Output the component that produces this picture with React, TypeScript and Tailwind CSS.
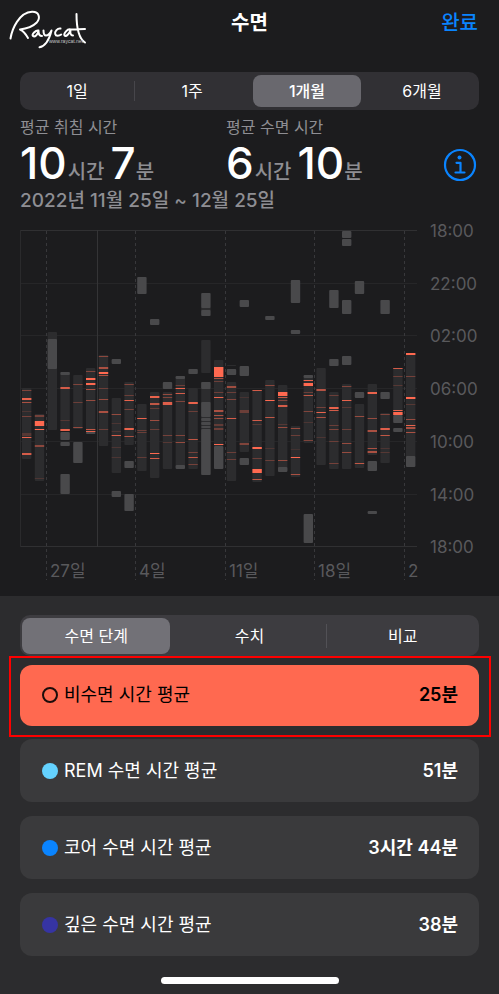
import React, { useState } from 'react';
import clsx from 'clsx';

type Range = [number, number];
// top, height, opacity
type Stripe = [number, number, number];

interface Night {
  asleep?: Range[];
  inBed?: Range[];
  awake?: Stripe[];
}

const nights: Night[] = [
  { asleep: [[388, 459]], awake: [[390, 1, 0.4], [398, 2, 0.9], [402, 1, 0.6], [411, 1, 0.15], [416, 1, 0.35], [433, 3, 0.2], [437, 1, 0.9], [453, 2, 0.8]] },
  { asleep: [[414, 481]], awake: [[415, 2, 0.35], [421, 5, 1], [429, 1, 1], [445, 2, 0.45], [478, 1, 0.15]] },
  { asleep: [[332, 430]], inBed: [[339, 369]] },
  { asleep: [[372, 431]], inBed: [[372, 375], [432, 440], [442, 446], [474, 494]], awake: [[387, 2, 0.8], [420, 1, 0.2], [429, 2, 0.9]] },
  { asleep: [[375, 429]], inBed: [[442, 463]], awake: [[384, 1, 0.4], [402, 1, 0.3], [427, 1, 0.5]] },
  { asleep: [[368, 433]], inBed: [[432, 434]], awake: [[371, 1, 0.4], [378, 2, 1], [383, 2, 1], [389, 1, 0.6], [400, 1, 0.5], [429, 1, 0.7], [431, 1, 0.9]] },
  { asleep: [[355, 446]], awake: [[356, 1, 0.45], [367, 2, 0.6], [372, 2, 1], [375, 1, 0.6], [388, 1, 0.3], [399, 1, 0.5], [411, 2, 0.6], [429, 1, 0.3]] },
  { asleep: [[398, 473]], inBed: [[359, 364], [491, 497]], awake: [[414, 1, 0.5], [423, 1, 0.15], [431, 1, 0.15], [435, 1, 0.8], [447, 1, 0.15], [457, 1, 0.15]] },
  { asleep: [[382, 445]], inBed: [[461, 468], [494, 511]], awake: [[384, 1, 0.4], [395, 1, 0.3], [400, 1, 0.9], [409, 1, 0.35], [428, 2, 0.9], [436, 1, 0.6]] },
  { asleep: [[404, 471]], inBed: [[277, 294]], awake: [[418, 1, 0.9], [430, 1, 0.3], [432, 1, 0.3], [457, 1, 0.25]] },
  { asleep: [[392, 478]], inBed: [[319, 325]], awake: [[396, 2, 0.9], [403, 2, 0.7], [408, 1, 0.25], [420, 1, 0.55], [429, 1, 0.3], [453, 1, 1], [458, 1, 0.8]] },
  { asleep: [[392, 469]], inBed: [[382, 389]], awake: [[394, 1, 0.5], [397, 1, 0.4], [402, 3, 0.85], [435, 1, 0.35], [442, 1, 0.2]] },
  { asleep: [[376, 468]], inBed: [[376, 379], [465, 469]], awake: [[385, 1, 0.3], [388, 1, 0.9], [393, 1, 0.8], [401, 1, 0.4], [435, 1, 0.4], [442, 1, 0.5]] },
  { asleep: [[388, 469]], inBed: [[369, 374]], awake: [[402, 2, 0.9], [411, 1, 0.3], [439, 1, 0.7], [452, 1, 0.35], [457, 1, 0.7], [464, 1, 0.35]] },
  { asleep: [[307, 311], [340, 373], [382, 475]], inBed: [[293, 308], [310, 316], [382, 389], [402, 417], [418, 421], [422, 425], [426, 428], [429, 475]] },
  { asleep: [[360, 446]], inBed: [[446, 469]], awake: [[367, 10, 1], [378, 1, 0.6], [381, 1, 0.3], [392, 1, 0.3], [397, 1, 0.9], [410, 2, 0.6], [415, 1, 0.6], [418, 1, 0.5], [424, 2, 0.25], [428, 2, 0.3], [444, 1, 1]] },
  { asleep: [[365, 366], [382, 481]], inBed: [[369, 375]], awake: [[386, 2, 0.55], [392, 1, 0.3], [399, 1, 0.4], [418, 1, 0.8], [452, 1, 0.3], [459, 1, 0.3]] },
  { asleep: [[392, 452]], inBed: [[300, 307], [366, 376], [458, 465]], awake: [[397, 1, 0.12], [410, 3, 0.3], [443, 2, 0.4]] },
  { asleep: [[390, 482]], awake: [[390, 1, 0.8], [420, 1, 0.8], [424, 1, 0.2], [447, 2, 1], [458, 1, 0.3], [469, 4, 1], [479, 1, 0.7]] },
  { asleep: [[380, 476]], inBed: [[316, 320]], awake: [[385, 1, 0.45], [400, 1, 1], [417, 1, 0.7], [448, 1, 0.15], [460, 1, 0.3]] },
  { asleep: [[385, 471]], inBed: [[467, 472]], awake: [[392, 4, 1], [397, 1, 0.7], [400, 1, 0.4], [405, 2, 0.8], [424, 1, 0.2], [427, 1, 0.5], [460, 1, 0.5]] },
  { asleep: [[426, 477]], inBed: [[280, 303], [330, 334]], awake: [[428, 1, 0.5], [435, 1, 0.3], [449, 1, 0.1], [457, 1, 1], [474, 1, 0.6]] },
  { asleep: [[375, 443]], inBed: [[375, 378], [514, 543]], awake: [[380, 1, 0.9], [383, 3, 1], [392, 1, 0.3], [395, 1, 0.7], [411, 1, 0.4], [422, 1, 0.15], [440, 1, 0.4]] },
  { asleep: [[368, 465]], awake: [[389, 2, 0.65], [407, 1, 0.35], [412, 1, 0.9], [417, 1, 0.6], [437, 1, 0.15]] },
  { asleep: [[392, 469]], inBed: [[290, 308], [359, 366]], awake: [[395, 1, 0.3], [407, 2, 0.9], [410, 1, 0.8], [425, 1, 0.3], [429, 1, 0.4], [441, 1, 0.3], [463, 1, 0.35]] },
  { asleep: [[384, 469]], inBed: [[231, 238], [239, 246], [300, 314], [356, 365]], awake: [[386, 1, 0.4], [400, 1, 0.9], [407, 1, 0.2], [429, 1, 0.3], [443, 1, 0.5], [452, 1, 0.5]] },
  { asleep: [[404, 468]], inBed: [[281, 294], [392, 398]], awake: [[416, 1, 0.5], [463, 1, 0.7]] },
  { asleep: [[384, 455]], inBed: [[461, 471], [511, 514]], awake: [[392, 2, 0.9], [418, 1, 0.5], [430, 2, 0.6], [448, 1, 0.6], [451, 2, 0.6]] },
  { asleep: [[413, 463]], inBed: [[300, 314], [392, 399]], awake: [[414, 1, 0.4], [428, 2, 0.85], [435, 1, 0.7], [448, 1, 0.15], [452, 1, 0.2]] },
  { asleep: [[368, 415]], inBed: [[415, 423], [428, 432]], awake: [[368, 1, 0.8], [376, 1, 0.3], [385, 1, 0.2], [410, 1, 0.9], [412, 3, 1]] },
  { asleep: [[353, 457]], inBed: [[456, 467]], awake: [[353, 2, 1], [376, 1, 0.35], [397, 2, 1], [404, 1, 0.2], [419, 1, 0.5], [425, 1, 0.9], [427, 2, 0.6], [432, 1, 0.6]] },
];

const hours = [
  { y: 230, label: '18:00' },
  { y: 283, label: '22:00' },
  { y: 335, label: '02:00' },
  { y: 388, label: '06:00' },
  { y: 441, label: '10:00' },
  { y: 494, label: '14:00' },
  { y: 546, label: '18:00' },
];

const weeks = [
  { x: 46, label: '27일' },
  { x: 135, label: '4일' },
  { x: 225, label: '11일' },
  { x: 314, label: '18일' },
  { x: 404, label: '2' },
];

const stages = [
  { label: '비수면 시간 평균', value: '25분', dot: 'border-2 border-[#1c0c0a]' },
  { label: 'REM 수면 시간 평균', value: '51분', dot: 'bg-[#64d2ff]' },
  { label: '코어 수면 시간 평균', value: '3시간 44분', dot: 'bg-[#0a84ff]' },
  { label: '깊은 수면 시간 평균', value: '38분', dot: 'bg-[#3634a3]' },
];

function Logo() {
  return (
    <svg viewBox="0 0 84 44" className="absolute left-2 top-2 h-11 w-[84px]" role="img" aria-label="Raycat">
      <g fill="none" stroke="#fff" strokeWidth="2" strokeLinecap="round" strokeLinejoin="round" transform="translate(-8 -8)">
        <path d="M10.500 38.500C12 29 19 12.500 32 11.800c7-.3 9 6 4.500 11-4 4-10 6-16.500 6.700 3.500 1.500 6 5 8 8.500" />
        <path d="M38.500 30.500c-3-.5-7 4-5.500 5.500 2 1.500 5-2 5.500-5 0 3 1 5 3.500 5" />
        <path d="M43.500 30.500c0 3 .5 5 2.500 5s4-2 5.500-5c-1.500 6-5 15.500-12 16.800" />
        <path d="M60.500 28.500c-3-.5-6 3-5.300 5.500.6 2.500 4 2 6 .500" />
        <path d="M70.500 29.500c-3-1-7 4-6 6 1.500 2 5-2 6-5.500-.5 3 0 5.500 2.500 5.500" />
        <path d="M76.500 14c0 10 1.500 24 8.500 28.500M71.500 29.500l13.500-.5" />
      </g>
      <text x="41" y="35" fontSize="5" fill="#c4c4c6" className="font-['Liberation_Sans',sans-serif]">
        www.raycat.net
      </text>
    </svg>
  );
}

function SleepChart() {
  return (
    <svg viewBox="0 213 499 383" className="block w-full" role="img" aria-label="수면 단계 차트">
      <g stroke="#2a2a2c">
        {hours.map(({ y }, i) => (
          <line key={i} x1="20" x2="417" y1={y + 0.5} y2={y + 0.5} stroke={i % 6 === 0 ? '#303032' : '#262628'} />
        ))}
        <line x1="20.5" x2="20.5" y1="230" y2="547" />
        <line x1="97.5" x2="97.5" y1="230" y2="547" stroke="#343436" />
      </g>
      {weeks.map(({ x }) => (
        <line key={x} x1={x + 0.5} x2={x + 0.5} y1="231" y2="580" stroke="#38383b" strokeDasharray="3 3" />
      ))}

      {nights.map(({ asleep = [], inBed = [], awake = [] }, i) => (
        <g key={i} transform={`translate(${22 + i * 12.8} 0)`}>
          {asleep.map(([top, end]) => (
            <rect key={top} y={top} width="9.400" height={end - top} rx="1" fill="#2c2c2e" />
          ))}
          {inBed.map(([top, end]) => (
            <rect key={top} y={top} width="9.400" height={end - top} rx="1" fill="#49494b" />
          ))}
          {awake.map(([top, height, opacity]) => (
            <rect key={top} y={top} width="9.400" height={height} fill="#ff6950" opacity={opacity} />
          ))}
        </g>
      ))}

      <g fill="#59595c" fontSize="17">
        {hours.map(({ y, label }, i) => (
          <text key={i} x="430" y={y + 7}>{label}</text>
        ))}
        {weeks.map(({ x, label }) => (
          <text key={x} x={x + 4} y="577">{label}</text>
        ))}
      </g>
    </svg>
  );
}

function Stat({ label, hours, minutes }: { label: string; hours: number; minutes: number }) {
  return (
    <div className="text-[#8e8e93]">
      <p className="text-base leading-5">{label}</p>
      <p className="mt-1 flex h-11 items-baseline text-xl font-medium leading-11">
        <span className="mr-px text-[44px] font-medium text-white">{hours}</span>시간
        <span className="ml-1.5 text-[44px] font-medium text-white">{minutes}</span>분
      </p>
    </div>
  );
}

export default function App() {
  const [period, setPeriod] = useState('1개월');
  const [tab, setTab] = useState('수면 단계');
  const [stage, setStage] = useState('비수면 시간 평균');
  const periods = ['1일', '1주', '1개월', '6개월'];
  const tabs = ['수면 단계', '수치', '비교'];

  const renderStage = ({ label, value, dot }: (typeof stages)[number]) => {
    const active = stage === label;
    return (
      <button
        key={label}
        type="button"
        aria-pressed={active}
        onClick={() => setStage(label)}
        className={clsx(
          'flex w-full items-center rounded-xl pl-[22px] pr-[21px] text-lg leading-6',
          active ? 'h-[61px] bg-[#ff6950] pb-0.5 text-black' : 'h-[63px] bg-[#3a3a3c] text-white',
        )}
      >
        <span className={clsx('mr-1.5 size-4 rounded-full', dot)} />
        <span>{label}</span>
        <span className="ml-auto font-semibold">{value}</span>
      </button>
    );
  };

  return (
    <div className="flex min-h-screen flex-col bg-[#1c1c1e] font-['Inter','Noto_Sans_CJK_KR',sans-serif] text-white">
      <header className="relative mb-7 flex h-11 items-center justify-center pt-0.5">
        <Logo />
        <h1 className="text-xl font-semibold leading-6">수면</h1>
        <button type="button" className="absolute right-[21px] text-xl font-medium leading-6 text-[#0a84ff]">
          완료
        </button>
      </header>

      <div className="mx-5 flex h-[38px] items-center rounded-[10px] bg-[#313034]">
        {periods.map((name, i) => (
          <React.Fragment key={name}>
            {i > 0 && <span className={clsx('h-5 w-px', i === 1 && 'bg-[#47464b]')} />}
            <button
              type="button"
              aria-pressed={period === name}
              onClick={() => setPeriod(name)}
              className={clsx(
                'mx-[3px] h-8 flex-1 rounded-lg text-base leading-5',
                period === name && 'bg-[#69686e] font-medium',
              )}
            >
              {name}
            </button>
          </React.Fragment>
        ))}
      </div>

      <section className="relative mx-5 mt-[7px]">
        <div className="grid grid-cols-[206px_1fr]">
          <Stat label="평균 취침 시간" hours={10} minutes={7} />
          <Stat label="평균 수면 시간" hours={6} minutes={10} />
        </div>
        <button type="button" aria-label="정보" className="absolute right-0.5 top-[31px]">
          <svg viewBox="0 0 34 34" className="size-[34px]" fill="none" stroke="#0a84ff" strokeWidth="2.200">
            <circle cx="17" cy="17" r="15" />
            <circle cx="16.500" cy="9.500" r="2" fill="#0a84ff" stroke="none" />
            <path d="M13.500 14.800h4v9.700M12.500 24.500h9" strokeLinecap="round" strokeLinejoin="round" />
          </svg>
        </button>
        <p className="mt-1 text-[19px] font-medium leading-6 text-[#8e8e93]">2022년 11월 25일 ~ 12월 25일</p>
      </section>

      <SleepChart />

      <main className="flex-1 bg-[#2c2c2e] pt-[19px]">
        <div className="mx-5 flex h-[41px] items-center rounded-[10px] bg-[#3d3c40]">
          {tabs.map((name, i) => (
            <React.Fragment key={name}>
              {i > 0 && <span className={clsx('h-6 w-px', i === 2 && 'bg-[#525156]')} />}
              <button
                type="button"
                aria-pressed={tab === name}
                onClick={() => setTab(name)}
                className={clsx(
                  'mx-0.5 h-9 flex-1 rounded-lg text-base leading-5',
                  tab === name && 'bg-[#727177]',
                )}
              >
                {name}
              </button>
            </React.Fragment>
          ))}
        </div>

        <div className="ml-[9px] mr-2 border-2 border-[#fe0000] pb-[9px] pl-[9px] pr-[10px] pt-[7px]">
          {renderStage(stages[0])}
        </div>
        <div className="mx-5 mt-0.5 flex flex-col gap-[14px]">{stages.slice(1).map(renderStage)}</div>

        <div className="mx-auto mb-2 mt-[21px] h-[7px] w-[178px] rounded-full bg-white" />
      </main>
    </div>
  );
}
